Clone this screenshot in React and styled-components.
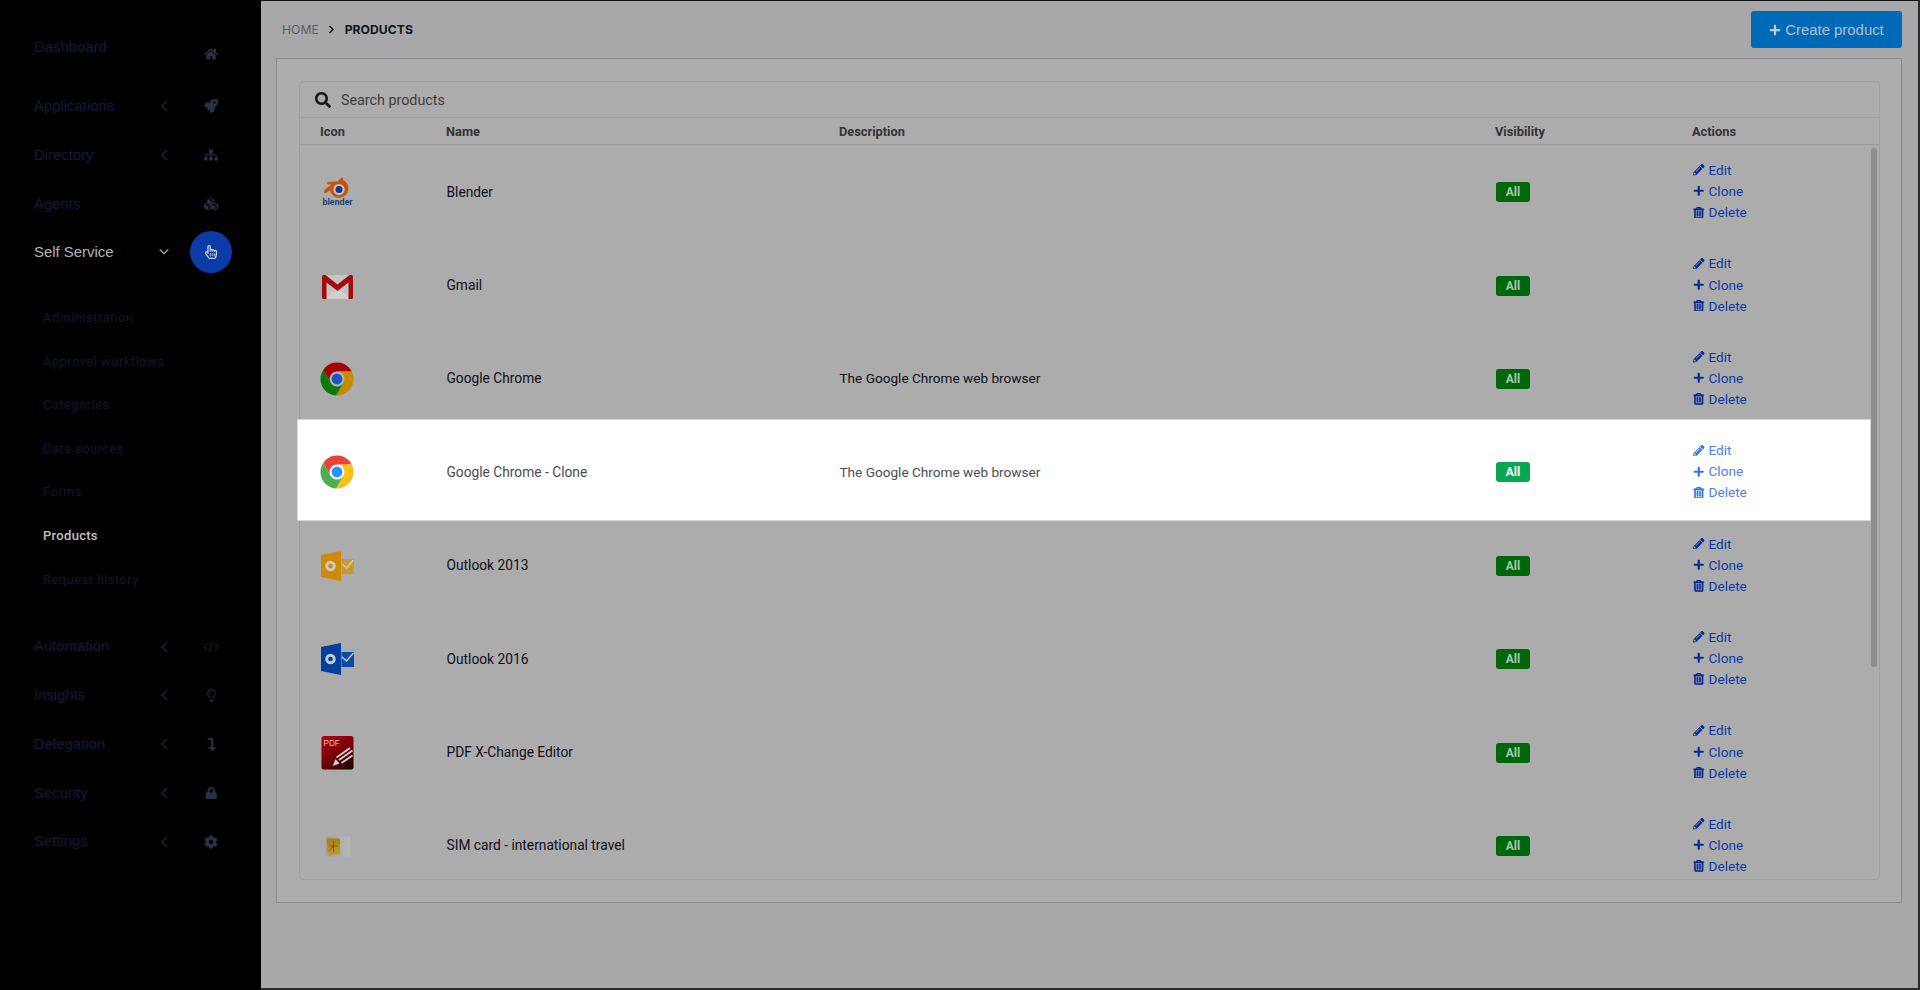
import React from "react";
import styled, { createGlobalStyle, css } from "styled-components";
import {
  FaHome, FaRocket, FaSitemap, FaCubes, FaRegHandPointer, FaRegLightbulb, FaLevelDownAlt,
  FaLock, FaCog, FaSearch, FaPlus, FaPencilAlt, FaRegTrashAlt, FaChevronRight,
} from "react-icons/fa";

const GlobalStyle = createGlobalStyle`
  html, body { margin: 0; padding: 0; background: #a8a8aa; }
  * { box-sizing: border-box; }
`;

const Page = styled.div`
  display: flex;
  width: 1920px;
  height: 990px;
  overflow: hidden;
  background: #000;
`;

/* sidebar */
const Sidebar = styled.nav`
  width: 261px;
  flex: none;
  padding-top: 26.4px;
  background: #000;
  font-family: "Liberation Sans", Arial, sans-serif;
`;

const NavItem = styled.div`
  display: flex;
  align-items: center;
  height: ${(p) => (p.$tall ? "55.2px" : "48.8px")};
  padding: 0 29px 0 34px;
`;

const NavLabel = styled.span`
  flex: 1;
  font-size: 14.9px;
  color: ${(p) => (p.$active ? "#b4b4b4" : "#131b3a")};
  padding-bottom: ${(p) => p.$lift || "0"};
`;

const Caret = styled.span`
  display: flex;
  justify-content: center;
  width: 12px;
  margin-right: 20px;
  color: ${(p) => (p.$active ? "#b8b8b8" : "#1c2540")};
`;

const IconWell = styled.span`
  display: flex;
  align-items: center;
  justify-content: center;
  width: 42px;
  height: 42px;
  border-radius: 50%;
  font-size: ${(p) => p.$size || "14px"};
  background: ${(p) => (p.$active ? "#0a3ba6" : "transparent")};
  color: ${(p) => (p.$active ? "#c6cfe2" : p.$faint ? "#1d2130" : "#2b3143")};
`;

const SubMenu = styled.div`
  padding: 19px 0 21.3px 43px;
`;

const SubItem = styled.div`
  display: flex;
  align-items: center;
  height: 43.6px;
  font-family: Roboto, sans-serif;
  font-size: 13px;
  letter-spacing: ${(p) => (p.$active ? "0.3px" : "0.4px")};
  font-weight: ${(p) => (p.$active ? 500 : 400)};
  color: ${(p) => (p.$active ? "#c2c2bc" : "#11172e")};
`;

/* main area */
const Main = styled.main`
  flex: 1;
  min-width: 0;
  background: #a8a8aa;
  border-top: 1px solid #111;
  border-right: 2px solid #2c2c2c;
  border-bottom: 2px solid #2c2c2c;
  font-family: Roboto, sans-serif;
`;

const TopBar = styled.header`
  display: flex;
  align-items: center;
  justify-content: space-between;
  height: 57px;
  padding: 0 16px 0 21px;
`;

const Breadcrumb = styled.div`
  display: flex;
  align-items: center;
  gap: 8.5px;
  font-family: Inter, sans-serif;
  font-size: 12.2px;
  color: #5c5c5e;
  svg { font-size: 9px; color: #15171f; }
  b { font-weight: 700; color: #12141c; }
`;

const CreateButton = styled.button`
  display: flex;
  align-items: center;
  justify-content: center;
  gap: 4px;
  width: 151px;
  height: 37px;
  border: 0;
  border-radius: 3px;
  background: #006ab8;
  color: #aebfcc;
  font-family: "Liberation Sans", Arial, sans-serif;
  font-size: 14.9px;
  svg { font-size: 12px; color: #c2ccd4; }
`;

const Panel = styled.section`
  margin: 0 16px 0 15px;
  padding: 22px 21px 22px 22px;
  background: #adadad;
  border: 1px solid #8d8d8d;
`;

const Card = styled.div`
  background: #acacac;
  border: 1px solid #a0a0a0;
  border-radius: 4px;
`;

const SearchBar = styled.div`
  display: flex;
  align-items: center;
  gap: 10px;
  height: 36px;
  padding: 1px 0 0 15px;
  border-bottom: 1px solid #a0a0a0;
  font-size: 14.3px;
  color: #3c3c3e;
  svg { font-size: 16px; color: #17171a; }
`;

const columns = css`
  display: grid;
  grid-template-columns: 126px 393px 656px 197px 1fr;
`;

const HeadRow = styled.div`
  ${columns}
  align-items: center;
  height: 27px;
  padding-left: 20px;
  border-bottom: 1px solid #9a9a9a;
  font-size: 12.8px;
  font-weight: 700;
  color: #333335;
`;

const RowList = styled.div`
  position: relative;
  height: 734px;
  padding-right: 9px;
  clip-path: inset(-6px 0 0 -6px);
`;

const ScrollThumb = styled.div`
  position: absolute;
  top: 3px;
  right: 2px;
  width: 6px;
  height: 519px;
  border-radius: 3px;
  background: #8d8d8d;
`;

const Row = styled.div`
  ${columns}
  align-items: center;
  height: 93.4px;
  padding-left: 20.5px;
  font-size: 13.75px;
  color: #0f0f18;
  ${(p) =>
    p.$lit &&
    css`
      position: relative;
      height: 99.4px;
      margin: -5px 0 -1px -2px;
      padding: 5px 0 1px 22.5px;
      background: #fff;
      box-shadow: 0 0 0 1px #d6d6d6;
      color: #4a4c55;
    `}
`;

const IconCell = styled.div`
  display: flex;
  width: 34px;
  height: 34px;
  margin: 1px 0 0 -0.5px;
`;

const Description = styled.span`
  font-size: 13.6px;
`;

const BadgeCell = styled.div`
  display: flex;
  margin: 1px 0 0 0.5px;
`;

const Badge = styled.span`
  display: flex;
  align-items: center;
  justify-content: center;
  width: 34px;
  height: 20px;
  border-radius: 3px;
  font-size: 12px;
  font-weight: 700;
  background: ${(p) => (p.$lit ? "#08a650" : "#00660a")};
  color: ${(p) => (p.$lit ? "#fff" : "#a8c8ac")};
`;

const Actions = styled.div`
  display: flex;
  flex-direction: column;
  gap: 3.6px;
  margin-top: -1px;
  padding-left: 0.5px;
`;

const ActionLink = styled.a`
  display: flex;
  align-items: center;
  gap: 4px;
  height: 17.5px;
  font-size: 13.6px;
  color: ${(p) => (p.$lit ? "#4d80f0" : "#0b3aa8")};
  svg { width: 11.5px; font-size: 11.5px; color: ${(p) => (p.$lit ? "#2f74e6" : "#06299a")}; }
`;

const TrashIcon = styled(FaRegTrashAlt)`
  stroke: currentColor;
  stroke-width: 28;
`;

/* small drawn icons */
const ThinChevron = ({ dir }) => {
  const points = { left: "8,2 3,7 8,12", down: "2,4 7,9 12,4" }[dir];
  return (
    <svg width={dir === "down" ? 14 : 11} height="14" viewBox={dir === "down" ? "0 0 14 14" : "0 0 11 14"}>
      <polyline points={points} fill="none" stroke="currentColor" strokeWidth="1.4" />
    </svg>
  );
};

const CodeIcon = () => (
  <svg width="16" height="14" viewBox="0 0 16 14">
    <path d="M4.5 3 L1 7 L4.5 11 M11.5 3 L15 7 L11.5 11 M9.5 1.5 L6.5 12.5" fill="none" stroke="currentColor" strokeWidth="1" />
  </svg>
);

const BlenderIcon = () => (
  <svg width="34" height="34" viewBox="0 0 34 34">
    <path d="M4.2 17.5 Q3.4 15.5 5.5 14 L11.5 9.6 L8 9.4 Q6 8.2 8 6.8 L17.5 6.6 L21 2.8 Q23.4 2.4 23.2 5 Q29 8 28.4 14.5 A9.3 9.3 0 0 1 10 15.2 L6.8 17.8 Q5 18.6 4.2 17.5 Z" fill="#c8540c" />
    <circle cx="19" cy="14.5" r="5.6" fill="#c4c4c8" />
    <circle cx="19" cy="14.5" r="3.5" fill="#123a80" />
    <text x="17.5" y="30" textAnchor="middle" fontFamily="Liberation Sans, sans-serif" fontWeight="700" fontSize="8.4" fill="#0c3a70">blender</text>
  </svg>
);

const GmailIcon = () => (
  <svg width="34" height="34" viewBox="0 0 34 34">
    <rect x="2" y="6" width="31" height="24" rx="1.5" fill="#c4c4c4" />
    <path d="M6 30 L17.5 18 L29 30 Z" fill="#d0d0d0" />
    <path d="M2 7.5 Q2 6 3.5 6 H5.5 L17.5 15.5 L29.5 6 H31.5 Q33 6 33 7.5 V28.5 Q33 30 31.5 30 H28.5 V13.5 L17.5 22 L6.5 13.5 V30 H3.5 Q2 30 2 28.5 Z" fill="#a00d0e" />
  </svg>
);

const ChromeIcon = ({ lit }) => {
  const sector = "M17 9.6 H31.75 A16.5 16.5 0 0 0 3.22 7.93 L10.59 20.7 A7.4 7.4 0 0 1 17 9.6 Z";
  const tones = lit
    ? { red: "#ea4335", yellow: "#fbc116", green: "#4caf50", ring: "#ffffff", core: "#2196f3" }
    : { red: "#a80000", yellow: "#c68a00", green: "#0a7a0a", ring: "#b4b4b4", core: "#1557c4" };
  return (
    <svg width="34" height="34" viewBox="0 0 34 34">
      <circle cx="17" cy="17" r="8" fill={tones.ring} />
      <path d={sector} fill={tones.red} />
      <path d={sector} fill={tones.yellow} transform="rotate(120 17 17)" />
      <path d={sector} fill={tones.green} transform="rotate(240 17 17)" />
      <circle cx="17" cy="17" r="5.4" fill={tones.core} />
    </svg>
  );
};

const OutlookIcon = ({ body, flap, top = 1, bottom = 33 }) => (
  <svg width="34" height="34" viewBox="0 0 34 34">
    <path d={`M1 ${top + 4} L21 ${top} V${bottom} L1 ${bottom - 4} Z`} fill={body} />
    <circle cx="10.5" cy="17" r="3.8" fill="none" stroke="#c9c9c9" strokeWidth="3" />
    <path d="M21.5 10 H34 V25 H21.5 Z" fill={flap} />
    <path d="M22 15 L26.5 19 L33.5 11" fill="none" stroke="#c9c9c9" strokeWidth="1.5" />
  </svg>
);

const PdfIcon = () => (
  <svg width="34" height="34" viewBox="0 0 34 34">
    <defs>
      <linearGradient id="pdfFill" x1="0.2" y1="0" x2="0.8" y2="1">
        <stop offset="0" stopColor="#b00010" />
        <stop offset="0.55" stopColor="#6e0008" />
        <stop offset="1" stopColor="#200004" />
      </linearGradient>
    </defs>
    <rect x="1.5" y="0" width="32" height="33.5" rx="2.5" fill="url(#pdfFill)" />
    <text x="3.5" y="9.5" fontFamily="Liberation Sans, sans-serif" fontSize="8.2" fill="#d8c4c4">PDF</text>
    <path d="M12.7 30 L15.5 23 L19.5 27.5 Z" fill="#d4d4d4" />
    <path d="M16.5 21.5 L30 12 M19 24 L32.5 14.5 M21.5 27 L32.5 19.5" fill="none" stroke="#d4d4d4" strokeWidth="1.7" />
  </svg>
);

const SimIcon = () => (
  <svg width="34" height="34" viewBox="0 0 34 34">
    <defs>
      <linearGradient id="simFill" x1="0" y1="0" x2="1" y2="0">
        <stop offset="0" stopColor="#9e9e9e" />
        <stop offset="1" stopColor="#b8b8b8" />
      </linearGradient>
      <linearGradient id="chipFill" x1="0" y1="0" x2="0" y2="1">
        <stop offset="0" stopColor="#a8820e" />
        <stop offset="1" stopColor="#c09a30" />
      </linearGradient>
    </defs>
    <rect x="6" y="7.5" width="24" height="20" rx="1" fill="url(#simFill)" />
    <rect x="7" y="9.5" width="13" height="16" rx="1.5" fill="url(#chipFill)" />
    <path d="M9 17 H18 M13.5 12 V23 M9 22 L13.5 17" fill="none" stroke="#6e5210" strokeWidth="0.7" />
  </svg>
);

const navTop = [
  { label: "Dashboard", icon: <FaHome />, tall: true, lift: "14px" },
  { label: "Applications", icon: <FaRocket />, caret: true },
  { label: "Directory", icon: <FaSitemap />, caret: true },
  { label: "Agents", icon: <FaCubes /> },
];

const navBottom = [
  { label: "Automation", icon: <CodeIcon />, caret: true, lift: "1px", faint: true },
  { label: "Insights", icon: <FaRegLightbulb />, caret: true, lift: "1px", size: "13px", faint: true },
  { label: "Delegation", icon: <FaLevelDownAlt />, caret: true, lift: "1px", size: "13px" },
  { label: "Security", icon: <FaLock />, caret: true, lift: "1px", size: "12.5px" },
  { label: "Settings", icon: <FaCog />, caret: true, lift: "1px" },
];

const subItems = ["Administration", "Approval workflows", "Categories", "Data sources", "Forms", "Products", "Request history"];

const products = [
  { name: "Blender", icon: <BlenderIcon /> },
  { name: "Gmail", icon: <GmailIcon /> },
  { name: "Google Chrome", desc: "The Google Chrome web browser", icon: <ChromeIcon /> },
  { name: "Google Chrome - Clone", desc: "The Google Chrome web browser", icon: <ChromeIcon lit />, lit: true },
  { name: "Outlook 2013", icon: <OutlookIcon body="#d08a00" flap="#c89a30" top={2} bottom={32} /> },
  { name: "Outlook 2016", icon: <OutlookIcon body="#003f9e" flap="#0a4aa6" /> },
  { name: "PDF X-Change Editor", icon: <PdfIcon /> },
  { name: "SIM card - international travel", icon: <SimIcon /> },
];

function NavRow({ item }) {
  return (
    <NavItem $tall={item.tall}>
      <NavLabel $lift={item.lift}>{item.label}</NavLabel>
      <Caret>{item.caret && <ThinChevron dir="left" />}</Caret>
      <IconWell $size={item.size} $faint={item.faint}>{item.icon}</IconWell>
    </NavItem>
  );
}

export default function App() {
  return (
    <Page>
      <GlobalStyle />
      <Sidebar>
        {navTop.map((item) => (
          <NavRow key={item.label} item={item} />
        ))}
        <NavItem>
          <NavLabel $active>Self Service</NavLabel>
          <Caret $active>
            <ThinChevron dir="down" />
          </Caret>
          <IconWell $active>
            <FaRegHandPointer />
          </IconWell>
        </NavItem>
        <SubMenu>
          {subItems.map((label) => (
            <SubItem key={label} $active={label === "Products"}>
              {label}
            </SubItem>
          ))}
        </SubMenu>
        {navBottom.map((item) => (
          <NavRow key={item.label} item={item} />
        ))}
      </Sidebar>
      <Main>
        <TopBar>
          <Breadcrumb>
            <span>HOME</span>
            <FaChevronRight />
            <b>PRODUCTS</b>
          </Breadcrumb>
          <CreateButton>
            <FaPlus />
            Create product
          </CreateButton>
        </TopBar>
        <Panel>
          <Card>
            <SearchBar>
              <FaSearch />
              Search products
            </SearchBar>
            <HeadRow>
              <span>Icon</span>
              <span>Name</span>
              <span>Description</span>
              <span>Visibility</span>
              <span>Actions</span>
            </HeadRow>
            <RowList>
              {products.map((p) => (
                <Row key={p.name} $lit={p.lit}>
                  <IconCell>{p.icon}</IconCell>
                  <span>{p.name}</span>
                  <Description>{p.desc}</Description>
                  <BadgeCell>
                    <Badge $lit={p.lit}>All</Badge>
                  </BadgeCell>
                  <Actions>
                    <ActionLink $lit={p.lit}><FaPencilAlt /> Edit</ActionLink>
                    <ActionLink $lit={p.lit}><FaPlus /> Clone</ActionLink>
                    <ActionLink $lit={p.lit}><TrashIcon /> Delete</ActionLink>
                  </Actions>
                </Row>
              ))}
              <ScrollThumb />
            </RowList>
          </Card>
        </Panel>
      </Main>
    </Page>
  );
}
